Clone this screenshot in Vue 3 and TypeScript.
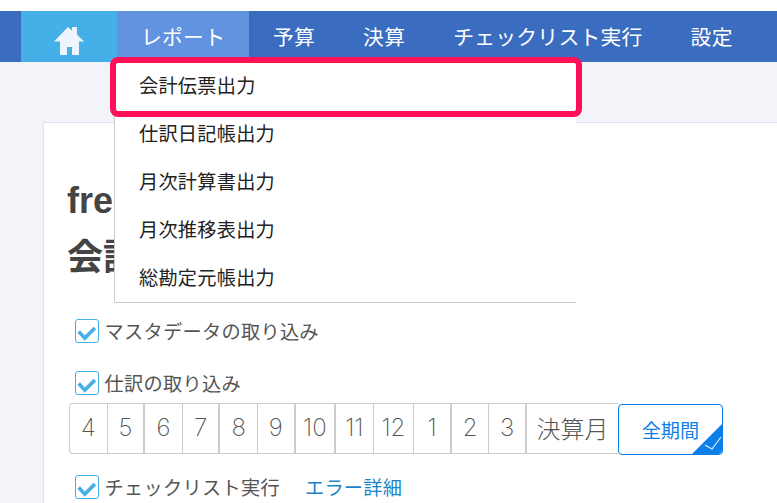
<script setup lang="ts">
const navItems: string[] = ['予算', '決算', 'チェックリスト実行', '設定']
const menuItems: string[] = ['会計伝票出力', '仕訳日記帳出力', '月次計算書出力', '月次推移表出力', '総勘定元帳出力']
const months: string[] = ['4', '5', '6', '7', '8', '9', '10', '11', '12', '1', '2', '3']
const thickAfter: string[] = ['5', '7', '9', '10', '1', '3']
</script>

<template>
  <div class="page">
    <nav class="nav">
      <a class="home" aria-label="ホーム">
        <svg class="home-icon" viewBox="0 0 30 28" width="30" height="28">
          <path fill="#eef4fd" d="M14 0 18 3.5V0h5v7.5L30 14.5H25V28H18V20H13V28H6V14.5H0z" />
        </svg>
      </a>
      <div class="report">
        <span>レポート</span>
        <ul class="menu">
          <li v-for="item in menuItems" :key="item">{{ item }}</li>
        </ul>
        <div class="highlight"></div>
      </div>
      <a v-for="item in navItems" :key="item" class="nav-item">{{ item }}</a>
    </nav>
    <main class="card">
      <h1 class="title">freee<br />会計</h1>
      <label class="check first">
        <span class="box"><svg viewBox="0 0 22 22" width="22" height="22"><path d="M2.7 11.5l6.1 6.6L18.9 8" fill="none" stroke="#45b0e8" stroke-width="3.6" /></svg></span>
        マスタデータの取り込み
      </label>
      <label class="check second">
        <span class="box"><svg viewBox="0 0 22 22" width="22" height="22"><path d="M2.7 11.5l6.1 6.6L18.9 8" fill="none" stroke="#45b0e8" stroke-width="3.6" /></svg></span>
        仕訳の取り込み
      </label>
      <div class="months">
        <div class="strip">
          <span
            v-for="m in months"
            :key="m"
            class="month"
            :class="{ wide: m === '10' || m === '12', thick: thickAfter.includes(m) }"
          >{{ m }}</span>
          <span class="month closing">決算月</span>
        </div>
        <button class="all">
          全期間
          <svg class="corner" viewBox="0 0 30 30" width="30" height="30">
            <path d="M30 0V26a4 4 0 0 1-4 4H0z" fill="#0d7fe8" />
            <path d="M13 21l7 4 9-12" fill="none" stroke="#dfeefd" stroke-width="1.2" />
          </svg>
        </button>
      </div>
      <div class="check third">
        <span class="box"><svg viewBox="0 0 22 22" width="22" height="22"><path d="M2.7 11.5l6.1 6.6L18.9 8" fill="none" stroke="#45b0e8" stroke-width="3.6" /></svg></span>
        チェックリスト実行
        <a class="error-link">エラー詳細</a>
      </div>
    </main>
  </div>
</template>

<style>
html, body { margin: 0; padding: 0; }
</style>

<style scoped>
.page {
  width: 777px;
  height: 503px;
  overflow: hidden;
  background: #f3f4f9;
  box-sizing: border-box;
  border-top: 11px solid #fff;
  font-family: "Noto Sans CJK JP", "Noto Sans", sans-serif;
}
.nav {
  display: flex;
  height: 51px;
  padding-left: 21px;
  background: #3a6cbf;
  color: #fff;
  font-size: 20.8px;
  line-height: 50px;
  letter-spacing: 0.25px;
  position: relative;
  z-index: 2;
}
.home {
  width: 96px;
  background: #45b0e8;
  display: flex;
  align-items: center;
  justify-content: center;
}
.home-icon { margin-top: 9px; }
.report {
  width: 132px;
  padding-left: 24px;
  box-sizing: border-box;
  background: #6293e0;
  position: relative;
}
.nav-item { padding: 0 24px; }
.menu {
  position: absolute;
  left: -3px;
  top: 51px;
  width: 461px;
  margin: 0;
  padding: 0;
  list-style: none;
  background: #fff;
  border-left: 1px solid #ccc;
  border-bottom: 1px solid #ccc;
  color: #222;
  font-size: 19.2px;
  letter-spacing: 0.25px;
}
.menu li {
  height: 48px;
  line-height: 46px;
  padding-left: 24px;
}
.highlight {
  position: absolute;
  left: -7px;
  top: 46px;
  width: 472px;
  height: 60px;
  box-sizing: border-box;
  border: 6px solid #ff1059;
  border-radius: 8px;
}
.card {
  margin: 60px 0 0 43px;
  height: 400px;
  background: #fff;
  border: 1px solid #e2e3e8;
  border-right: 0;
  padding-left: 23px;
  color: #555;
}
.title {
  margin: 49px 0 0;
  font-family: "Liberation Sans", "Noto Sans CJK JP", sans-serif;
  font-size: 36px;
  line-height: 57px;
  font-weight: 700;
  color: #444;
}
.check {
  display: flex;
  align-items: center;
  height: 24px;
  margin-left: 8px;
  font-size: 19.2px;
  letter-spacing: 0.3px;
  color: #555;
}
.first { margin-top: 33px; }
.second { margin-top: 28px; }
.third { margin-top: 20px; }
.box {
  flex: none;
  width: 24px;
  height: 24px;
  margin-right: 5.5px;
  box-sizing: border-box;
  border: 1px solid #45b0e8;
  border-radius: 3px;
  display: flex;
  align-items: center;
  justify-content: center;
}
.error-link {
  margin-left: 25px;
  color: #1a84c8;
}
.months {
  display: flex;
  margin: 8px 0 0 2px;
}
.strip {
  display: flex;
  height: 51px;
  box-sizing: border-box;
  border: 1px solid #ccc;
  border-right: 0;
  border-radius: 4px 0 0 4px;
}
.month {
  width: 37.6px;
  box-sizing: border-box;
  border-right: 1px solid #ccc;
  text-align: center;
  font-family: "Inter", "Noto Sans CJK JP", sans-serif;
  font-size: 24px;
  font-weight: 200;
  line-height: 48px;
  color: #555;
}
.month.thick { border-right-width: 2px; }
.month.wide { width: 40.5px; }
.month.closing {
  width: 91px;
  border-right: 0;
  font-family: "Noto Sans CJK JP", sans-serif;
}
.all {
  position: relative;
  width: 105px;
  height: 51px;
  margin-top: 1px;
  padding: 0;
  box-sizing: border-box;
  border: 1px solid #0d7fe8;
  border-radius: 4px;
  background: #fff;
  color: #0d7fe8;
  font: inherit;
  font-size: 19.2px;
  overflow: hidden;
}
.corner {
  position: absolute;
  right: 0;
  bottom: 0;
}
</style>
